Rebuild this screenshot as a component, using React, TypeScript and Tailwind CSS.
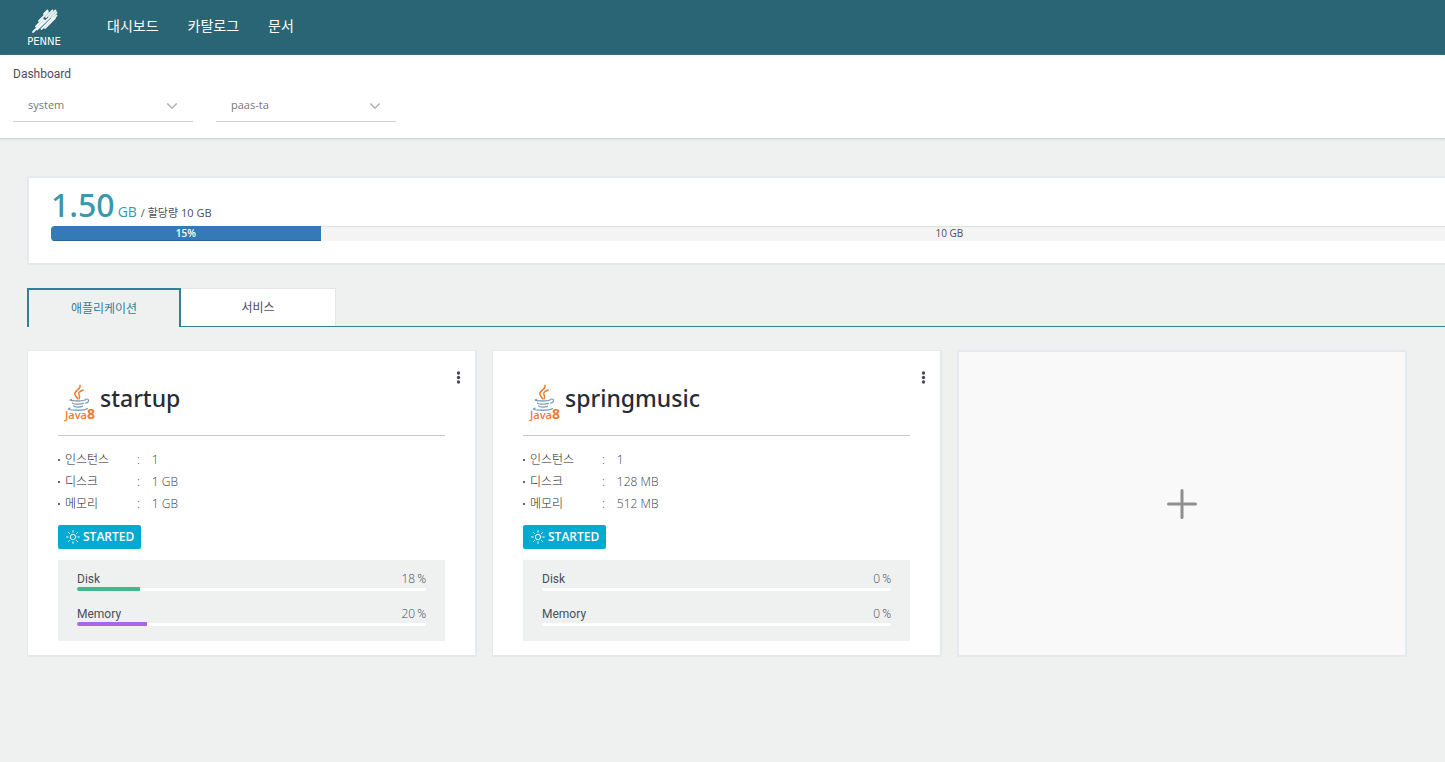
import React from "react";

type App = {
  name: string;
  instances: string;
  disk: string;
  memory: string;
  diskUsage: number;
  memoryUsage: number;
};

const apps: App[] = [
  { name: "startup", instances: "1", disk: "1 GB", memory: "1 GB", diskUsage: 18, memoryUsage: 20 },
  { name: "springmusic", instances: "1", disk: "128 MB", memory: "512 MB", diskUsage: 0, memoryUsage: 0 },
];

function Logo() {
  return (
    <a href="#home" aria-label="PENNE" className="block">
      <svg width="50" height="40" viewBox="0 0 50 40" className="block">
        <g stroke="#eef6f7" strokeWidth="1.8" strokeLinecap="round">
          <path d="M14 24 25.500 12.500" />
          <path d="M17 18.500 24 11.500" />
          <path d="M18 21.500 31 9" />
          <path d="M20 13 29 4" />
          <path d="M22.500 21 34 9.500" />
          <path d="M25 6 28.500 2.500" />
          <path d="M27 9 33.500 2.500" />
          <path d="M30 9 36.500 2.500" />
          <path d="M26 20 36 10" />
          <path d="M33 9 37.500 4.500" />
          <path d="M34.500 10.500 37.500 7.500" />
        </g>
        <text
          x="25"
          y="37"
          textAnchor="middle"
          fill="#ffffff"
          fontSize="10"
          fontFamily="DejaVu Sans, sans-serif"
        >
          PENNE
        </text>
      </svg>
    </a>
  );
}

function JavaLogo() {
  return (
    <svg width="32" height="38" viewBox="0 0 32 38" className="block shrink-0" aria-hidden="true">
      <g fill="none" stroke="#ee7a2b" strokeLinecap="round">
        <path strokeWidth="1.5" d="M16 1.200c1.500 3.800-6 5.600-5.200 9 .4 1.800 2.400 3 2.800 4.600" />
        <path strokeWidth="1.4" d="M19.200 6c-3.200 1.200-5.200 2.600-4.400 4.400.6 1.300 1.700 2 .2 4.400" />
      </g>
      <g fill="none" stroke="#7c9cb5" strokeLinecap="round">
        <path strokeWidth="1.300" d="M7.500 15.500c-6 1.600 11 2.200 14 .2" />
        <path strokeWidth="1.200" d="M21.500 15.200c4-1.200 4.200 3 .2 4" />
        <path strokeWidth="1.300" d="M8.500 19c1 1.600 9 1.500 11 .3" />
        <path strokeWidth="1.300" d="M9.500 22c1 1.500 7.500 1.300 9 .2" />
        <path strokeWidth="1.300" d="M6 24.200c-7 2 14 3.200 17.500.3" />
      </g>
      <text x="1" y="35" fill="#ee7a2b" fontSize="11" fontWeight="600" fontFamily="Open Sans, sans-serif">
        Java
      </text>
      <text x="23" y="35" fill="#ee7a2b" fontSize="14" fontWeight="bold" fontFamily="Open Sans, sans-serif">
        8
      </text>
    </svg>
  );
}

function SunIcon() {
  return (
    <svg width="14" height="14" viewBox="0 0 14 14" fill="none" stroke="currentColor" strokeWidth="1" strokeLinecap="round" aria-hidden="true">
      <circle cx="7" cy="7" r="2.700" />
      <path d="M7 .7v1.500M7 11.800v1.500M.7 7h1.500M11.800 7h1.500M2.500 2.500l1 1M10.500 10.500l1 1M2.500 11.500l1-1M10.500 3.500l1-1" />
    </svg>
  );
}

function Picker({ id, label, value }: { id: string; label: string; value: string }) {
  return (
    <div className="grid w-[180px] items-center">
      <select
        id={id}
        aria-label={label}
        defaultValue={value}
        className="col-start-1 row-start-1 h-8 w-full appearance-none border-b border-[#cfcfd6] bg-transparent pl-[15px] text-[11px] text-[#777] outline-none"
      >
        <option value={value}>{value}</option>
      </select>
      <svg
        width="12"
        height="8"
        viewBox="0 0 12 8"
        fill="none"
        stroke="#b0b0b0"
        strokeWidth="1.500"
        className="pointer-events-none col-start-1 row-start-1 mr-[15px] justify-self-end"
        aria-hidden="true"
      >
        <path d="M1.300 1.500 6 6.200l4.700-4.700" />
      </svg>
    </div>
  );
}

function Usage({ label, value, color }: { label: string; value: number; color: string }) {
  return (
    <div>
      <div className="flex justify-between text-[12px] leading-4 text-[#4b4d5c]">
        <span className="font-[Roboto]">{label}</span>
        <span className="flex gap-0.5 font-light">
          <span>{value}</span>
          <span className="font-[Roboto]">%</span>
        </span>
      </div>
      <div
        role="progressbar"
        aria-label={label}
        aria-valuenow={value}
        className="flex h-1 flex-col justify-end rounded-sm bg-linear-to-b from-[#efefef] from-25% to-white to-25%"
      >
        <div className={`h-1 rounded-l-sm ${color}`} style={{ width: `${value}%` }} />
      </div>
    </div>
  );
}

function Spec({ label, value }: { label: string; value: string }) {
  return (
    <div className="flex h-[22px] items-center text-[12px] font-light text-[#3d3f4c]">
      <dt className="flex w-[79px] items-center gap-[5px] text-[#22232c]">
        <span className="size-0.5 bg-[#666]" />
        <span>{label}</span>
      </dt>
      <dd className="flex gap-3">
        <span>:</span>
        <span>{value}</span>
      </dd>
    </div>
  );
}

function AppCard({ app }: { app: App }) {
  return (
    <article className="border border-r-2 border-b-2 border-[#e6e9ec] bg-white px-[30px] pb-[14px]">
      <header className="flex h-[85px] items-start border-b border-[#c8c8c8]">
        <div className="flex flex-1 items-center gap-1 pt-[33px] pl-1.5">
          <JavaLogo />
          <h2 className="-mt-2.5 font-['Noto_Sans'] text-[23px] leading-8 font-medium text-[#272b35]">
            <a href={`#${app.name}`}>{app.name}</a>
          </h2>
        </div>
        <button type="button" aria-label={`${app.name} menu`} className="-mr-4 pt-5">
          <svg width="5" height="13" viewBox="0 0 5 13" fill="#4a4a55" className="block">
            <circle cx="2.500" cy="2" r="1.700" />
            <circle cx="2.500" cy="6.500" r="1.700" />
            <circle cx="2.500" cy="11" r="1.700" />
          </svg>
        </button>
      </header>
      <dl className="mt-[13px]">
        <Spec label="인스턴스" value={app.instances} />
        <Spec label="디스크" value={app.disk} />
        <Spec label="메모리" value={app.memory} />
      </dl>
      <button
        type="button"
        className="mt-2.5 flex h-6 items-center gap-[3px] rounded-xs bg-[#00aad0] pr-[7px] pl-2 text-[12px] font-semibold text-white"
      >
        <SunIcon />
        STARTED
      </button>
      <div className="mt-[11px] flex h-[81px] flex-col gap-[15px] bg-[#eff1f1] px-[19px] pt-[11px]">
        <Usage label="Disk" value={app.diskUsage} color="bg-[#3fba8c]" />
        <Usage label="Memory" value={app.memoryUsage} color="bg-[#aa66e8]" />
      </div>
    </article>
  );
}

export default function App() {
  return (
    <div className="min-h-screen overflow-x-hidden bg-[#eff1f1] font-['Open_Sans','Noto_Sans_CJK_KR',sans-serif] text-[#4b4d5c]">
      <header className="flex h-[55px] items-center bg-[#2a6575] pl-[19px]">
        <Logo />
        <nav className="ml-[38px] flex gap-[29px] pb-1 text-[14px] leading-5 text-white">
          <a href="#dashboard">대시보드</a>
          <a href="#catalog">카탈로그</a>
          <a href="#docs">문서</a>
        </nav>
      </header>

      <section className="border-b border-[#d3d6d6] bg-white px-[13px] pt-[11px] pb-4 shadow-[0_1px_2px_#dcdfdf]">
        <h1 className="font-[Roboto] text-[12px] leading-4">Dashboard</h1>
        <div className="mt-2 flex gap-[23px]">
          <Picker id="org" label="Organization" value="system" />
          <Picker id="space" label="Space" value="paas-ta" />
        </div>
      </section>

      <main className="min-w-[1899px] px-[27px] pt-[37px]">
        <section className="border-2 border-[#e6e9ec] bg-white px-[22px] pt-[9px] pb-[22px]">
          <p className="mb-[3px] flex h-9 items-baseline text-[11px] leading-4">
            <span className="font-['Noto_Sans'] text-[32px] leading-9 font-medium text-[#3b97ad]">1.50</span>
            <span className="ml-[3px] text-[14px] text-[#3b97ad]">GB</span>
            <span className="ml-1">/ 할당량 10 GB</span>
          </p>
          <div className="flex h-[15px] overflow-hidden rounded-sm bg-[#f4f4f4] text-[10px] leading-[15px] shadow-[inset_0_1px_1px_#dedede]">
            <div
              role="progressbar"
              aria-label="Memory quota"
              aria-valuenow={15}
              className="border-b border-[#2d659b] bg-[#337ab7] text-center font-semibold text-white"
              style={{ width: "15%" }}
            >
              15%
            </div>
            <div className="flex-1">
              <span className="block pl-[615px]">10 GB</span>
            </div>
          </div>
        </section>

        <div role="tablist" className="mt-[23px] flex h-[39px] border-b border-[#338096] text-[12px]">
          <button
            type="button"
            role="tab"
            aria-selected="true"
            className="-mb-px w-[154px] border-2 border-b-0 border-[#338096] bg-[#eff1f1] text-[#338096]"
          >
            애플리케이션
          </button>
          <button
            type="button"
            role="tab"
            aria-selected="false"
            className="w-[155px] border border-b-0 border-l-0 border-[#e4e6e8] bg-white"
          >
            서비스
          </button>
        </div>

        <section className="mt-[23px] grid grid-cols-4 gap-[15px]">
          {apps.map((app) => (
            <AppCard key={app.name} app={app} />
          ))}
          <button
            type="button"
            aria-label="Add application"
            className="flex items-center justify-center border-2 border-[#e6e9ec] bg-[#f9f9f9]"
          >
            <svg width="30" height="30" viewBox="0 0 30 30" stroke="#8f8f8f" strokeWidth="3" strokeLinecap="round" aria-hidden="true">
              <path d="M15 1.500v27M1.500 15h27" />
            </svg>
          </button>
        </section>
      </main>
    </div>
  );
}
